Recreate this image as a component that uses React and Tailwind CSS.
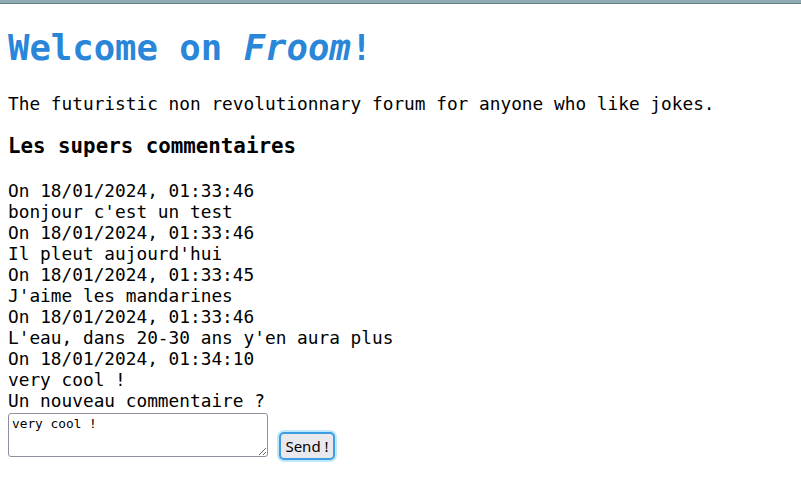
import { useState } from 'react';

const comments = [
  { date: '18/01/2024, 01:33:46', text: "bonjour c'est un test" },
  { date: '18/01/2024, 01:33:46', text: "Il pleut aujourd'hui" },
  { date: '18/01/2024, 01:33:45', text: "J'aime les mandarines" },
  { date: '18/01/2024, 01:33:46', text: "L'eau, dans 20-30 ans y'en aura plus" },
  { date: '18/01/2024, 01:34:10', text: 'very cool !' },
];

export default function App() {
  const [draft, setDraft] = useState('very cool !');

  return (
    <div className="min-h-[493px] bg-white text-black font-['DejaVu_Sans_Mono',monospace]">
      <div className="h-[4px] bg-[#8fabb4] border-b border-[#687f87]" />
      <div className="px-2">
        <h1 className="mt-[23px] text-[35.6px] leading-[42px] font-bold text-[#2a86d9]">
          Welcome on <em>Froom</em>!
        </h1>
        <p className="mt-[24px] text-[17.8px] leading-[21px]">
          The futuristic non revolutionnary forum for anyone who like jokes.
        </p>
        <h3 className="mt-[20px] text-[20.8px] leading-[25px] font-bold">Les supers commentaires</h3>

        <div className="mt-[21px] text-[17.8px] leading-[21px]">
          {comments.map((c, i) => (
            <div key={i}>
              <div>On {c.date}</div>
              <div>{c.text}</div>
            </div>
          ))}
          <div>Un nouveau commentaire ?</div>
        </div>

        <div className="flex items-start">
          <textarea
            value={draft}
            onChange={(e) => setDraft(e.target.value)}
            className="mt-[2px] w-[260px] h-[44px] border border-[#8f8f9d] rounded-[3px] px-[3px] py-[2px] text-[12.8px] leading-[15px] font-['DejaVu_Sans_Mono',monospace] resize bg-white"
          />
          <button className="ml-[11px] mt-[21px] w-[56px] h-[28px] rounded-[5px] border-2 border-[#3d9ce2] bg-[#e9e9ed] ring-2 ring-[#bfe8fb] text-[15px] leading-none font-['Noto_Sans',sans-serif] text-black">
            Send !
          </button>
        </div>
      </div>
    </div>
  );
}
